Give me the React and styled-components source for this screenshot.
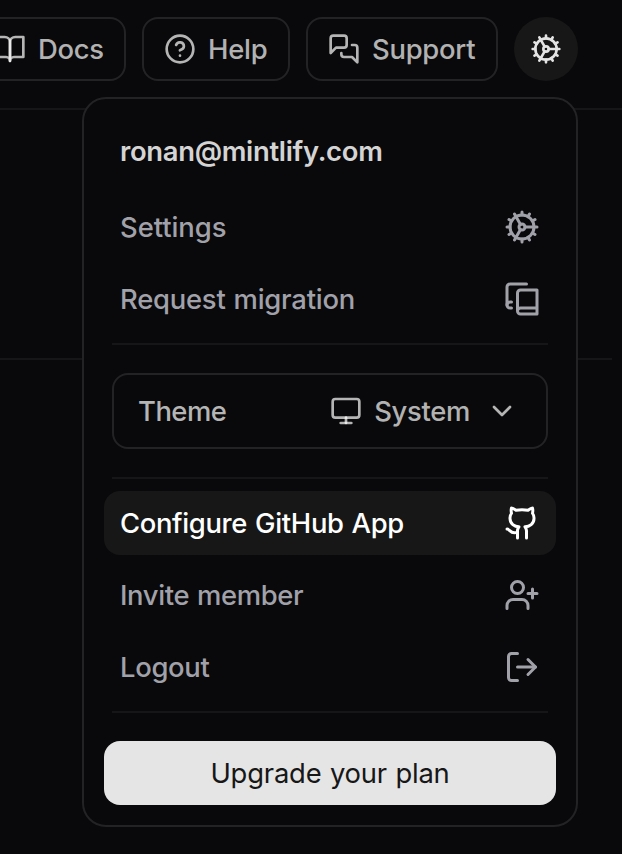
import React from "react";
import styled, { createGlobalStyle } from "styled-components";

const GlobalStyle = createGlobalStyle`
  *, *::before, *::after { box-sizing: border-box; }
  html, body { margin: 0; background: #09090b; }
  body {
    overflow: hidden;
    font-family: Inter, "Liberation Sans", sans-serif;
    font-size: 27.4px;
    line-height: 40px;
  }
  button { font: inherit; letter-spacing: inherit; cursor: pointer; }
`;

const Page = styled.div`
  position: relative;
  width: 622px;
  height: 854px;
  overflow: hidden;
  background: #09090b;
`;

const Header = styled.header`
  display: flex;
  justify-content: flex-end;
  align-items: flex-start;
  gap: 16px;
  height: 110px;
  padding: 17px 44px 0 0;
  border-bottom: 2px solid #161618;
`;

const NavButton = styled.button`
  display: flex;
  flex: none;
  align-items: center;
  gap: 12px;
  width: ${(p) => p.$width}px;
  height: 64px;
  padding: 0 0 0 20px;
  border: 2px solid #232325;
  border-radius: 16px;
  background: transparent;
  color: rgba(255, 255, 255, 0.7);
  white-space: nowrap;
`;

const Avatar = styled.button`
  display: flex;
  flex: none;
  align-items: center;
  justify-content: center;
  width: 64px;
  height: 64px;
  padding: 0;
  border: 0;
  border-radius: 50%;
  background: #171717;
  color: #e4e4e4;
`;

const Section = styled.div`
  width: 612px;
  height: 250px;
  border-bottom: 2px solid #161618;
`;

const Menu = styled.div`
  position: absolute;
  top: 97px;
  left: 82px;
  display: flex;
  flex-direction: column;
  width: 496px;
  height: 730px;
  padding: 20px;
  border: 2px solid #232325;
  border-radius: 24px;
  background: #09090b;
`;

const Email = styled.div`
  display: flex;
  align-items: center;
  height: 64px;
  margin-bottom: 12px;
  padding: 0 16px;
  color: #d4d4d4;
`;

const Items = styled.div`
  display: flex;
  flex-direction: column;
  gap: 8px;
`;

const Item = styled.button`
  display: flex;
  align-items: center;
  justify-content: space-between;
  height: 64px;
  padding: 0 16px;
  border: 0;
  border-radius: 16px;
  background: ${(p) => (p.$active ? "#171717" : "transparent")};
  color: ${(p) => (p.$active ? "#ffffff" : "#a1a1aa")};
`;

const Label = styled.span`
  letter-spacing: ${(p) => p.$spacing ?? -0.3}px;
  word-spacing: 1px;
  font-weight: ${(p) => p.$weight || 500};
`;

const Divider = styled.div`
  flex: none;
  height: 2px;
  margin: 12px 8px;
  background: #161618;
`;

const ThemeRow = styled.div`
  display: flex;
  align-items: center;
  justify-content: space-between;
  height: 76px;
  margin: 16px 8px;
  padding: 0 28px 0 24px;
  border: 2px solid #232325;
  border-radius: 16px;
  color: #b5b5b5;
`;

const ThemeSelect = styled.button`
  display: flex;
  align-items: center;
  gap: 12px;
  padding: 0;
  border: 0;
  background: transparent;
  color: rgba(255, 255, 255, 0.7);
`;

const Chevron = styled.span`
  display: flex;
  margin-left: 4px;
`;

const Upgrade = styled.button`
  height: 64px;
  margin-top: 16px;
  border: 0;
  border-radius: 16px;
  background: #e5e5e5;
  color: #171717;
`;

const Svg = styled.svg`
  display: block;
  flex: none;
  fill: none;
  stroke: currentColor;
  stroke-linecap: round;
  stroke-linejoin: round;
`;

const icons = {
  book: ["M2 3h6a4 4 0 0 1 4 4v14a3 3 0 0 0-3-3H2z", "M22 3h-6a4 4 0 0 0-4 4v14a3 3 0 0 1 3-3h7z"],
  help: ["M2 12a10 10 0 1 0 20 0a10 10 0 1 0-20 0", "M9.09 9a3 3 0 0 1 5.83 1c0 2-3 3-3 3", "M12 17h.01"],
  messages: [
    "M14 9a2 2 0 0 1-2 2H6l-4 4V4c0-1.1.9-2 2-2h8a2 2 0 0 1 2 2v5Z",
    "M18 9h2a2 2 0 0 1 2 2v11l-4-4h-6a2 2 0 0 1-2-2v-1",
  ],
  cog: [
    "M12 20a8 8 0 1 0 0-16 8 8 0 0 0 0 16Z",
    "M12 14a2 2 0 1 0 0-4 2 2 0 0 0 0 4Z",
    "M12 2v2M12 22v-2M17 20.66l-1-1.73M11 10.27 7 3.34M20.66 17l-1.73-1M3.34 7l1.73 1M14 12h8M2 12h2M20.66 7l-1.73 1M3.34 17l1.73-1M17 3.34l-1 1.73M11 13.73l-4 6.93",
  ],
  bookCopy: [
    "M2 16V4a2 2 0 0 1 2-2h11",
    "M5 14H4a2 2 0 1 0 0 4h1",
    "M22 18H11a2 2 0 1 0 0 4h11V6H11a2 2 0 0 0-2 2v12",
  ],
  monitor: ["M4 3h16a2 2 0 0 1 2 2v10a2 2 0 0 1-2 2H4a2 2 0 0 1-2-2V5a2 2 0 0 1 2-2Z", "M8 21h8", "M12 17v4"],
  chevron: ["m6 9 6 6 6-6"],
  github: [
    "M15 22v-4a4.8 4.8 0 0 0-1-3.5c3 0 6-2 6-5.5.08-1.25-.27-2.48-1-3.5.28-1.15.28-2.35 0-3.5 0 0-1 0-3 1.5-2.64-.5-5.36-.5-8 0C6 2 5 2 5 2c-.3 1.15-.3 2.35 0 3.5A5.403 5.403 0 0 0 4 9c0 3.5 3 5.5 6 5.5-.39.49-.68 1.05-.85 1.65-.17.6-.22 1.23-.15 1.85v4",
    "M9 18c-4.51 2-5-2-7-2",
  ],
  userPlus: [
    "M16 21v-2a4 4 0 0 0-4-4H6a4 4 0 0 0-4 4v2",
    "M5 7a4 4 0 1 0 8 0a4 4 0 1 0-8 0",
    "M19 8v6M22 11h-6",
  ],
  logout: ["M9 21H5a2 2 0 0 1-2-2V5a2 2 0 0 1 2-2h4", "m16 17 5-5-5-5", "M21 12H9"],
};

function Icon({ name, size = 36, stroke = 2 }) {
  return (
    <Svg width={size} height={size} viewBox="0 0 24 24" strokeWidth={stroke} aria-hidden="true">
      {icons[name].map((d) => (
        <path key={d} d={d} />
      ))}
    </Svg>
  );
}

export default function App() {
  return (
    <Page>
      <GlobalStyle />
      <Header>
        <NavButton $width={154}>
          <Icon name="book" size={32} />
          <Label>Docs</Label>
        </NavButton>
        <NavButton $width={148}>
          <Icon name="help" size={32} />
          <Label $spacing={-0.2}>Help</Label>
        </NavButton>
        <NavButton $width={192}>
          <Icon name="messages" size={32} />
          <Label $spacing={-0.25}>Support</Label>
        </NavButton>
        <Avatar aria-label="Account">
          <Icon name="cog" size={32} />
        </Avatar>
      </Header>
      <Section />
      <Menu>
        <Email>
          <Label $weight={600}>ronan@mintlify.com</Label>
        </Email>
        <Items>
          <Item>
            <Label $spacing={-0.05}>Settings</Label>
            <Icon name="cog" />
          </Item>
          <Item>
            <Label $spacing={-0.22}>Request migration</Label>
            <Icon name="bookCopy" />
          </Item>
        </Items>
        <Divider />
        <ThemeRow>
          <Label $spacing={-0.5}>Theme</Label>
          <ThemeSelect>
            <Icon name="monitor" size={32} />
            <Label>System</Label>
            <Chevron>
              <Icon name="chevron" size={32} />
            </Chevron>
          </ThemeSelect>
        </ThemeRow>
        <Divider />
        <Items>
          <Item $active>
            <Label $spacing={-0.33}>Configure GitHub App</Label>
            <Icon name="github" />
          </Item>
          <Item>
            <Label $spacing={-0.36}>Invite member</Label>
            <Icon name="userPlus" />
          </Item>
          <Item>
            <Label>Logout</Label>
            <Icon name="logout" />
          </Item>
        </Items>
        <Divider />
        <Upgrade>
          <Label $weight={400} $spacing={-0.2}>Upgrade your plan</Label>
        </Upgrade>
      </Menu>
    </Page>
  );
}
